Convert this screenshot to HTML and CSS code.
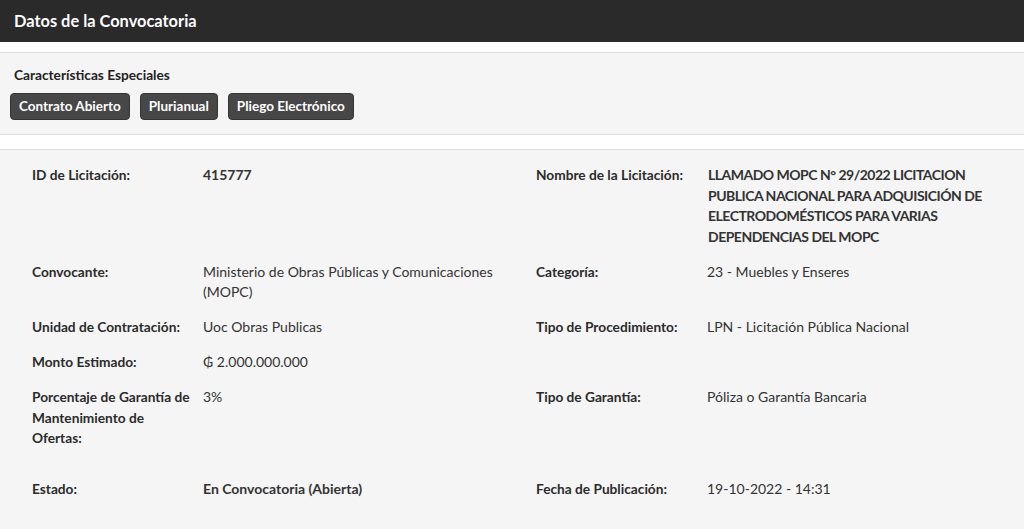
FILE: index.html
```html
<!DOCTYPE html>
<html lang="es">
<head>
<meta charset="utf-8">
<title>Datos de la Convocatoria</title>
<link rel="stylesheet" href="styles.css">
</head>
<body>
<div class="panel">
  <div class="panel-heading">Datos de la Convocatoria</div>
  <div class="gap"></div>
  <div class="features">
    <div class="features-title">Características Especiales</div>
    <div class="tags">
      <span class="tag">Contrato Abierto</span>
      <span class="tag">Plurianual</span>
      <span class="tag">Pliego Electrónico</span>
    </div>
  </div>
  <div class="gap gap-2"></div>
  <div class="details">
    <div class="grid">
      <div class="label">ID de Licitación:</div>
      <div class="value strong">415777</div>
      <div class="label">Nombre de la Licitación:</div>
      <div class="value strong name">LLAMADO MOPC N° 29/2022 LICITACION PUBLICA NACIONAL PARA ADQUISICIÓN DE ELECTRODOMÉSTICOS PARA VARIAS DEPENDENCIAS DEL MOPC</div>

      <div class="label">Convocante:</div>
      <div class="value">Ministerio de Obras Públicas y Comunicaciones (MOPC)</div>
      <div class="label">Categoría:</div>
      <div class="value">23 - Muebles y Enseres</div>

      <div class="label">Unidad de Contratación:</div>
      <div class="value">Uoc Obras Publicas</div>
      <div class="label">Tipo de Procedimiento:</div>
      <div class="value">LPN - Licitación Pública Nacional</div>

      <div class="label">Monto Estimado:</div>
      <div class="value">₲ 2.000.000.000</div>
      <div class="label"></div>
      <div class="value"></div>

      <div class="label">Porcentaje de Garantía de Mantenimiento de Ofertas:</div>
      <div class="value">3%</div>
      <div class="label">Tipo de Garantía:</div>
      <div class="value">Póliza o Garantía Bancaria</div>

      <div class="label late">Estado:</div>
      <div class="value strong late">En Convocatoria (Abierta)</div>
      <div class="label late">Fecha de Publicación:</div>
      <div class="value late">19-10-2022 - 14:31</div>
    </div>
  </div>
</div>
</body>
</html>
```
FILE: styles.css
```css
html, body {
  margin: 0;
  padding: 0;
  background: #ffffff;
}
body {
  font-family: Lato, "PT Sans", "Noto Sans", sans-serif;
  color: #333333;
  font-size: 14px;
}
.panel {
  display: flex;
  flex-direction: column;
  min-height: 529px;
}
.panel-heading {
  background: #2a2a2a;
  color: #ffffff;
  font-weight: 700;
  font-size: 16.4px;
  height: 42px;
  line-height: 42px;
  padding: 0 14px;
}
.gap {
  height: 10px;
  background: #ffffff;
}
.gap-2 {
  height: 14px;
}
.features {
  background: #f5f5f5;
  border-top: 1px solid #dddddd;
  border-bottom: 1px solid #dddddd;
  padding: 13px 10px 14px;
}
.features-title {
  font-size: 13.7px;
  font-weight: 700;
  line-height: 18px;
  padding-left: 4px;
  color: #222222;
}
.tags {
  display: flex;
  gap: 10px;
  margin-top: 9px;
}
.tag {
  background: #474747;
  border: 1px solid #353535;
  border-radius: 4px;
  color: #ffffff;
  font-size: 13.5px;
  font-weight: 700;
  height: 25px;
  line-height: 25px;
  padding: 0 8px;
}
.details {
  background: #f5f5f5;
  border-top: 1px solid #dddddd;
  padding: 15px 0 40px 32px;
  flex: 1;
}
.grid {
  display: grid;
  grid-template-columns: 171px 333px 171px 300px;
  row-gap: 14.5px;
  line-height: 20.5px;
}
.label {
  font-weight: 700;
  font-size: 13.7px;
  color: #2b2b2b;
  padding-right: 8px;
}
.value {
  color: #333333;
}
.strong {
  font-weight: 700;
}
.name {
  padding-left: 1px;
  letter-spacing: -0.5px;
}
.late {
  margin-top: 16px;
}
```
